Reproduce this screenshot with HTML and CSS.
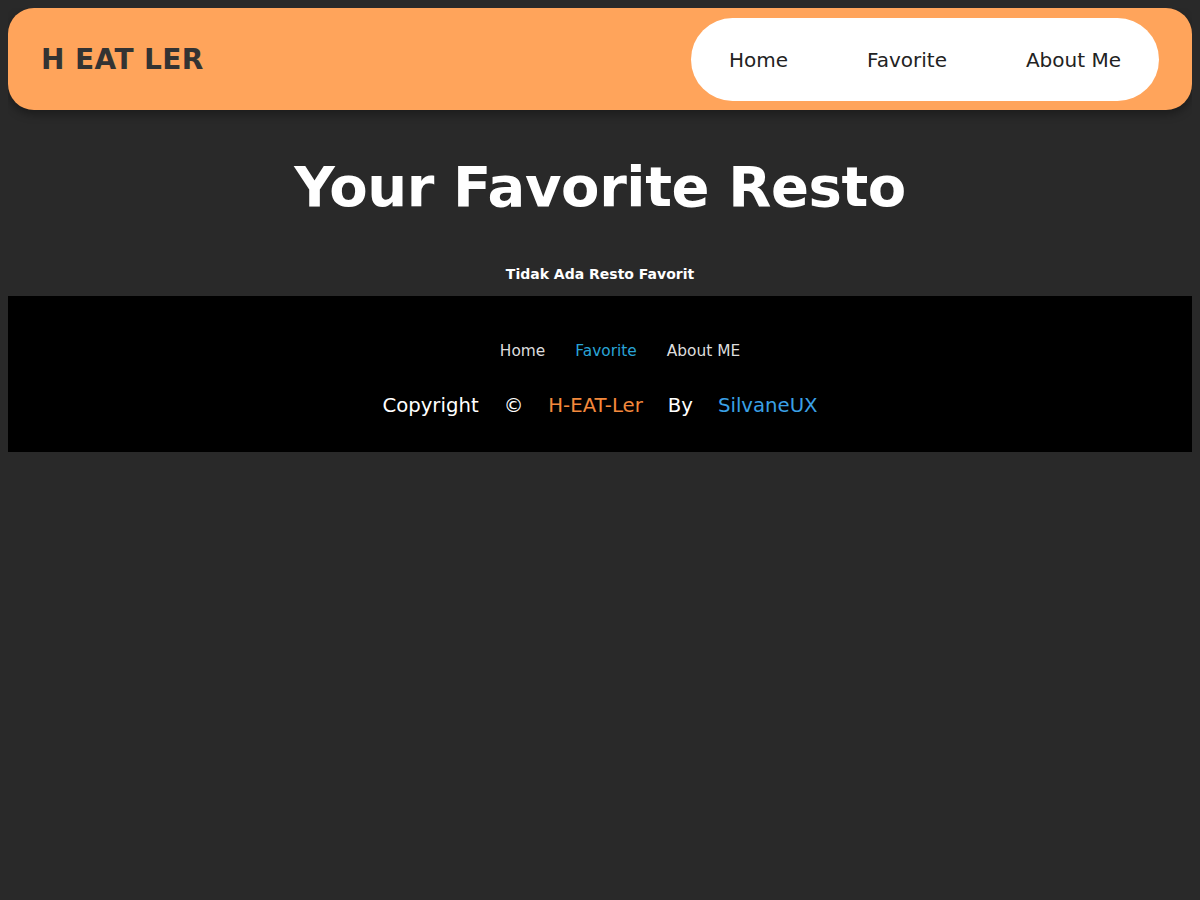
FILE: index.html
```html
<!DOCTYPE html>
<html lang="id">
<head>
<meta charset="utf-8">
<title>H EAT LER</title>
<link rel="stylesheet" href="styles.css">
</head>
<body>
<header class="app-bar">
  <h1 class="logo">H EAT LER</h1>
  <nav class="nav">
    <a href="#" class="nav-link">Home</a>
    <a href="#" class="nav-link">Favorite</a>
    <a href="#" class="nav-link">About Me</a>
  </nav>
</header>
<main class="content">
  <h2 class="title">Your Favorite Resto</h2>
  <p class="empty">Tidak Ada Resto Favorit</p>
</main>
<footer class="footer">
  <ul class="footer-nav">
    <li><a href="#" class="f-link">Home</a></li>
    <li><a href="#" class="f-link active">Favorite</a></li>
    <li><a href="#" class="f-link">About ME</a></li>
  </ul>
  <p class="copy"><span>Copyright</span><span>©</span><span class="brand">H-EAT-Ler</span><span>By</span><span class="author">SilvaneUX</span></p>
</footer>
</body>
</html>
```
FILE: styles.css
```css
* { box-sizing: border-box; }
body {
  margin: 8px;
  background: #292929;
  font-family: "DejaVu Sans", "Open Sans", sans-serif;
}
.app-bar {
  display: flex;
  align-items: center;
  justify-content: space-between;
  height: 102px;
  padding: 1px 33px 0;
  background: #ffa45b;
  border-radius: 26px;
  box-shadow: 0 4px 10px rgba(0,0,0,0.35);
}
.logo {
  margin: 0;
  font-size: 28px;
  font-weight: bold;
  color: #333;
  letter-spacing: 0.4px;
}
.nav {
  display: flex;
  align-items: center;
  gap: 79px;
  height: 83px;
  padding: 0 38px;
  background: #fff;
  border-radius: 42px;
}
.nav-link {
  font-size: 20px;
  color: #222;
  text-decoration: none;
}
.content {
  text-align: center;
  padding-top: 39px;
  padding-bottom: 14px;
}
.title {
  margin: 0;
  font-size: 56px;
  font-weight: bold;
  color: #fff;
  line-height: 76px;
  letter-spacing: -0.4px;
}
.empty {
  margin: 41px 0 0;
  font-size: 14px;
  font-weight: bold;
  color: #fff;
}
.footer {
  background: #000;
  padding: 45px 0 35px;
  text-align: center;
}
.footer-nav {
  display: flex;
  justify-content: center;
  gap: 30px;
  margin: 0;
  padding: 0 0 0 40px;
  list-style: none;
}
.f-link {
  font-size: 15.4px;
  color: #ddd;
  text-decoration: none;
}
.f-link.active { color: #29a3d6; }
.copy {
  display: flex;
  justify-content: center;
  gap: 25px;
  margin: 34px 0 0;
  font-size: 19.7px;
  color: #fff;
}
.brand { color: #f4893c; }
.author { color: #3aa0e6; }
```
